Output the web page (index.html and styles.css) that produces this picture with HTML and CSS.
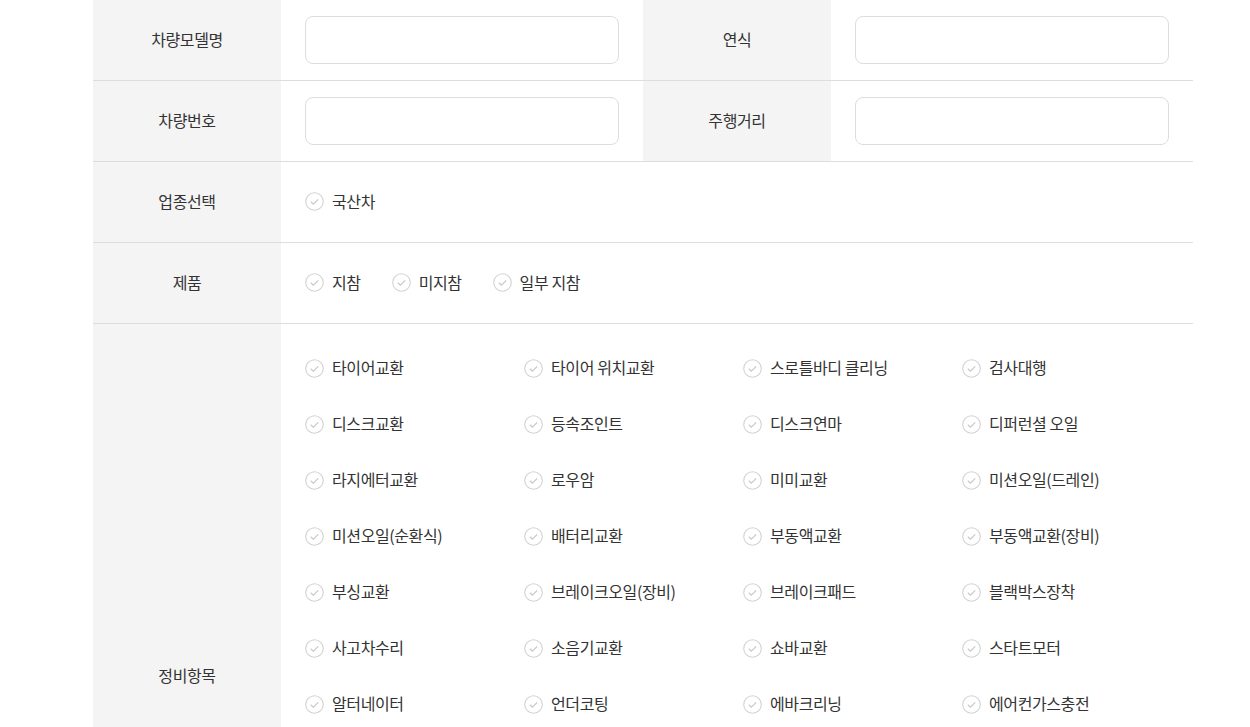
FILE: index.html
```html
<!DOCTYPE html>
<html>

<head>
    <title>정비 접수</title>
    <link rel="stylesheet" href="styles.css">
</head>

<body>
    <!--차량 정보 폼-->
    <div class="form-table">
        <div class="form-row">
            <div class="form-label">차량모델명</div>
            <div class="form-field"><input type="text" class="text-input"></div>
            <div class="form-label">연식</div>
            <div class="form-field"><input type="text" class="text-input"></div>
        </div>
        <div class="form-row">
            <div class="form-label">차량번호</div>
            <div class="form-field"><input type="text" class="text-input"></div>
            <div class="form-label">주행거리</div>
            <div class="form-field"><input type="text" class="text-input"></div>
        </div>
        <div class="form-row">
            <div class="form-label">업종선택</div>
            <div class="form-field wide">
                <label class="check-item"><span class="check-icon"></span>국산차</label>
            </div>
        </div>
        <div class="form-row">
            <div class="form-label">제품</div>
            <div class="form-field wide">
                <label class="check-item"><span class="check-icon"></span>지참</label>
                <label class="check-item"><span class="check-icon"></span>미지참</label>
                <label class="check-item"><span class="check-icon"></span>일부 지참</label>
            </div>
        </div>
        <div class="form-row">
            <div class="form-label">정비항목</div>
            <div class="form-field wide">
                <div class="check-grid" id="items"></div>
            </div>
        </div>
    </div>

    <script>
        // 정비항목 목록
        let items = [
            "타이어교환", "타이어 위치교환", "스로틀바디 클리닝", "검사대행",
            "디스크교환", "등속조인트", "디스크연마", "디퍼런셜 오일",
            "라지에터교환", "로우암", "미미교환", "미션오일(드레인)",
            "미션오일(순환식)", "배터리교환", "부동액교환", "부동액교환(장비)",
            "부싱교환", "브레이크오일(장비)", "브레이크패드", "블랙박스장착",
            "사고차수리", "소음기교환", "쇼바교환", "스타트모터",
            "알터네이터", "언더코팅", "에바크리닝", "에어컨가스충전",
            "에어컨필터", "에어크리너", "엔진오일", "엔진플러싱",
            "연료필터", "와이퍼", "오토미션오일", "인젝터클리닝",
            "전구교환", "점화플러그", "제동등", "체인교환",
            "캘리퍼", "쿨러액", "타이밍벨트", "판금도색",
            "파워스티어링오일", "하체코팅", "헤드라이트복원", "휠얼라인먼트"
        ];

        let grid = document.getElementById("items");
        items.forEach(function (name) {
            let item = document.createElement("label");
            item.className = "check-item";
            item.innerHTML = '<span class="check-icon"></span><span class="check-text">' + name + '</span>';
            grid.appendChild(item);
        });

        // 체크 아이콘 그리기
        document.querySelectorAll(".check-icon").forEach(function (icon) {
            icon.innerHTML = '<svg width="19" height="19" viewBox="0 0 19 19">' +
                '<circle cx="9.5" cy="9.5" r="8.8" fill="none" stroke="#d2d2d2" stroke-width="1.1"/>' +
                '<polyline points="5.8,9.8 8.4,12.2 13.2,7.3" fill="none" stroke="#c8c8c8" stroke-width="1.2"/>' +
                '</svg>';
        });
    </script>
</body>

</html>
```

FILE: styles.css
```css
  body {
      margin: 0;
      background-color: #fff;
      font-family: "Noto Sans CJK KR", "Noto Sans", sans-serif;
      color: #333;
  }

  /* 폼 테이블 */
  .form-table {
      width: 1100px;
      margin-left: 93px;
  }

  .form-row {
      display: grid;
      grid-template-columns: 188px 362px 188px 362px;
      border-bottom: 1px solid #dddddd;
  }

  .form-label {
      display: flex;
      align-items: center;
      justify-content: center;
      min-height: 80px;
      padding-bottom: 2px;
      box-sizing: border-box;
      background-color: #f4f4f4;
      font-size: 16px;
      letter-spacing: -0.4px;
      color: #333;
  }

  .form-field {
      display: flex;
      align-items: center;
      padding-left: 24px;
  }

  .form-field.wide {
      grid-column: span 3;
      padding-bottom: 3px;
  }

  .text-input {
      width: 314px;
      height: 48px;
      box-sizing: border-box;
      border: 1px solid #dddddd;
      border-radius: 8px;
      background-color: #fff;
      outline: none;
  }

  /* 체크 항목 */
  .check-item {
      display: inline-flex;
      align-items: center;
      margin-right: 31px;
      font-size: 16px;
      letter-spacing: -0.4px;
      color: #333;
      cursor: pointer;
  }

  .check-icon {
      display: inline-flex;
      width: 19px;
      height: 19px;
      margin-right: 8px;
      position: relative;
      top: 1px;
  }

  .check-grid {
      display: grid;
      grid-template-columns: repeat(4, 219px);
      grid-auto-rows: 56px;
      padding: 15px 0 14px;
  }

  .check-grid .check-item {
      margin-right: 0;
  }
```
